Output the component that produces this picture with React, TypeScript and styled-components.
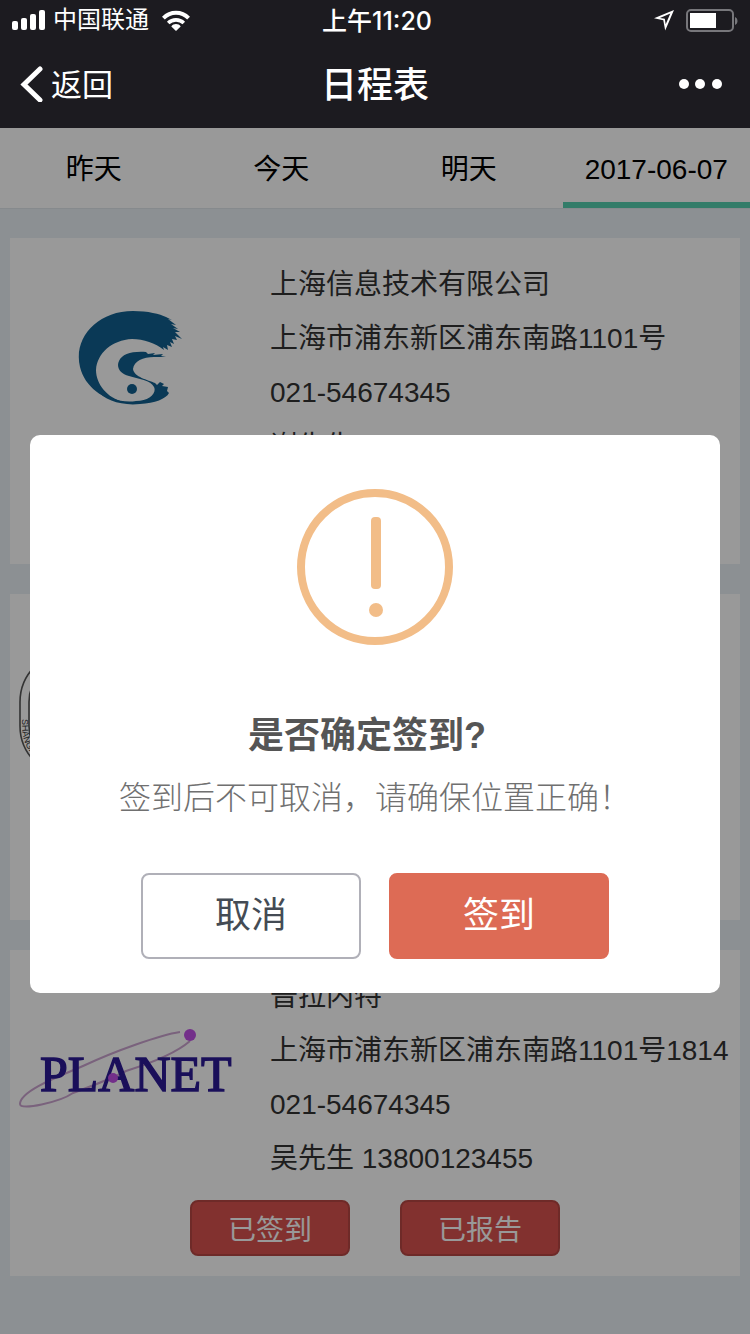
import React from 'react';
import styled, { createGlobalStyle, css } from 'styled-components';

const sans = '"Liberation Sans", "Noto Sans CJK SC", sans-serif';

const GlobalStyle = createGlobalStyle`
  *, *::before, *::after { box-sizing: border-box; }
  body { margin: 0; font-family: ${sans}; background: #e9f0f5; }
  button { font-family: inherit; cursor: pointer; }
  h1, h2, p { margin: 0; }
`;

const Screen = styled.div`
  min-height: 100vh;
  display: flex;
  flex-direction: column;
`;

const Header = styled.header`
  background: #1c1b20;
  color: #fff;
`;

const ThreeColumns = css`
  display: grid;
  grid-template-columns: 1fr auto 1fr;
  align-items: center;
`;

const StatusBar = styled.div`
  ${ThreeColumns}
  height: 40px;
  padding: 0 12px;
  font-size: 24px;
  line-height: 40px;
`;

const StatusSide = styled.div<{ $end?: boolean }>`
  display: flex;
  align-items: center;
  justify-content: ${(p) => (p.$end ? 'flex-end' : 'flex-start')};
  gap: ${(p) => (p.$end ? '12px' : '7px')};
`;

const Carrier = styled.span`
  margin-right: 6px;
`;

const Clock = styled.time`
  padding: 2px 0 0 4px;
  font-family: Inter, "Noto Sans CJK SC", sans-serif;
  font-size: 25px;
  line-height: 38px;
  font-weight: 500;
`;

const NavBar = styled.div`
  ${ThreeColumns}
  height: 88px;
  padding: 0 20px;
`;

const BackButton = styled.button`
  display: flex;
  align-items: center;
  gap: 8px;
  justify-self: start;
  padding: 0;
  border: 0;
  background: none;
  color: #fff;
  font-size: 31px;
  line-height: 44px;
`;

const BackLabel = styled.span`
  padding-top: 4px;
`;

const Title = styled.h1`
  padding-top: 4px;
  font-size: 36px;
  line-height: 44px;
  font-weight: 500;
`;

const MoreButton = styled.button`
  display: flex;
  justify-self: end;
  margin-right: 8px;
  padding: 0;
  border: 0;
  background: none;
`;

const Stage = styled.main`
  position: relative;
  flex: 1;
  padding-bottom: 58px;
  background: #e9f0f5;
`;

const Tabs = styled.nav`
  display: grid;
  grid-template-columns: repeat(4, 1fr);
  height: 81px;
  background: #fff;
  border-bottom: 1px solid #dfe6ec;
`;

const Tab = styled.button<{ $active?: boolean }>`
  padding: 10px 0 0;
  border: 0;
  border-bottom: 6px solid ${(p) => (p.$active ? '#55cfb0' : 'transparent')};
  background: none;
  color: #000;
  font-size: 28px;
  line-height: 54px;
  white-space: nowrap;
`;

const CardList = styled.div`
  display: flex;
  flex-direction: column;
  gap: 30px;
  padding: 29px 10px 0;
`;

const Card = styled.article`
  padding: 20px 0;
  background: #fff;
`;

const CardBody = styled.div`
  display: grid;
  grid-template-columns: 240px 1fr;
  column-gap: 20px;
  min-height: 216px;
`;

const LogoCell = styled.div`
  display: flex;
  align-items: center;
  justify-content: center;
  height: 200px;
`;

const Line = styled.p`
  height: 54px;
  color: #333;
  font-size: 28px;
  line-height: 54px;
  white-space: nowrap;
`;

const CardActions = styled.div`
  display: flex;
  justify-content: center;
  gap: 50px;
  margin-top: 14px;
`;

const StateButton = styled.button`
  width: 160px;
  height: 56px;
  padding: 0;
  border: 2px solid #b84744;
  border-radius: 8px;
  background: #d9534f;
  color: #fff;
  font-size: 28px;
`;

const Overlay = styled.div`
  position: absolute;
  inset: 0;
  display: flex;
  align-items: center;
  justify-content: center;
  padding: 0 30px 34px;
  background: rgba(0, 0, 0, 0.4);
`;

const Dialog = styled.section`
  display: flex;
  flex-direction: column;
  align-items: center;
  width: 100%;
  padding: 54px 20px 34px;
  border-radius: 10px;
  background: #fff;
`;

const DialogTitle = styled.h2`
  margin-top: 65px;
  padding-right: 16px;
  color: #555;
  font-size: 36px;
  line-height: 52px;
  font-weight: 700;
`;

const DialogText = styled.p`
  margin-top: 12px;
  color: #707070;
  font-size: 32px;
  line-height: 48px;
  font-weight: 300;
`;

const DialogActions = styled.div`
  display: flex;
  gap: 28px;
  margin-top: 51px;
`;

const DialogButton = styled.button<{ $primary?: boolean }>`
  width: 220px;
  height: 86px;
  padding: 0 0 8px;
  border: 2px solid ${(p) => (p.$primary ? '#dd6b55' : '#b0b0b8')};
  border-radius: 8px;
  background: ${(p) => (p.$primary ? '#dd6b55' : '#fff')};
  color: ${(p) => (p.$primary ? '#fff' : '#444b54')};
  font-size: 36px;
`;

const SignalIcon = () => (
  <svg width="34" height="22" viewBox="0 0 34 22" fill="#fff" aria-hidden="true">
    <rect x="0" y="12" width="6" height="9" rx="2" />
    <rect x="9" y="9" width="6" height="12" rx="2" />
    <rect x="18" y="5" width="6" height="16" rx="2" />
    <rect x="27" y="1" width="6" height="20" rx="2" />
  </svg>
);

const WifiIcon = () => (
  <svg width="28" height="21" viewBox="0 0 28 21" fill="none" stroke="#fff" strokeWidth="4" aria-hidden="true">
    <path d="M1.4 8.2C8.5 1 19.5 1 26.6 8.2" />
    <path d="M6.2 13C10.5 8.8 17.5 8.8 21.8 13" strokeWidth="3.6" />
    <path d="M9.3 16.4C11.5 13.3 16.5 13.3 18.7 16.4L14 21Z" fill="#fff" stroke="none" />
  </svg>
);

const LocationIcon = () => (
  <svg width="20" height="22" viewBox="0 0 20 22" aria-hidden="true">
    <path
      fill="#fff"
      fillRule="evenodd"
      d="M20 1 0 9.3 9.3 11.2 11.2 21.5ZM16.3 4.6 11.7 15.2 10.8 9.7 5.9 8.9Z"
    />
  </svg>
);

const BatteryIcon = () => (
  <svg width="52" height="24" viewBox="0 0 52 24" aria-hidden="true">
    <rect x="1" y="2" width="46" height="21" rx="4" fill="none" stroke="#77777b" strokeWidth="2" />
    <rect x="4" y="5" width="26" height="15" fill="#fff" />
    <path d="M49 9C52.3 10.3 52.3 15.7 49 17Z" fill="#77777b" />
  </svg>
);

const BackIcon = () => (
  <svg width="23" height="36" viewBox="0 0 23 36" fill="none" stroke="#fff" strokeWidth="5" aria-hidden="true">
    <path d="M20 3 4 18.5 20 34" strokeLinecap="round" />
  </svg>
);

const MoreIcon = () => (
  <svg width="44" height="12" viewBox="0 0 44 12" fill="#fff" aria-hidden="true">
    <circle cx="6" cy="6" r="5" />
    <circle cx="22" cy="6" r="5" />
    <circle cx="39" cy="6" r="5" />
  </svg>
);

const WaveLogo = () => (
  <svg width="104" height="94" viewBox="0 0 104 94" fill="#12608f" role="img" aria-label="上海信息技术有限公司">
    <path d="M55 0C70 0 82 3 88 6L94 9 90 8 98 14 93 13 100 18 95 17 102 21 97 21 104 28 97 25 99 29 94 28 96 33 92 31 94 36 89 34 90 39 85 36 86 39C77 32 66 28 54 28C34 29 19 42 18 59C18 73 29 87 46 91C25 89 7 76 2 56C-5 27 19 0 55 0Z" />
    <path d="M68 41 70 43 77 42 75 44 85 43 83 45 88 46 76 46C65 46 56 50 55 58C56 66 70 69 77 72L79 74 82 71 86 73 84 75 90 76 89 80 91 82C88 88 77 92 62 93C43 95 27 89 18 79C30 88 45 92 58 90C71 90 79 82 76 76C73 69 60 68 51 65C42 63 38 56 41 50C44 43 54 40 68 41Z" />
    <circle cx="54" cy="78" r="5" />
  </svg>
);

const SealLogo = () => (
  <svg width="222" height="126" viewBox="0 0 222 126" fill="none" stroke="#555" role="img" aria-label="SHANGHAI">
    <rect x="1" y="1" width="220" height="124" rx="50" strokeWidth="1.6" />
    <rect x="10" y="10" width="202" height="106" rx="41" strokeWidth="1.6" />
    <path id="seal-rim" d="M3 68V75A47 47 0 0 0 50 122" stroke="none" />
    <text fill="#333" stroke="none" fontSize="9" fontFamily="Liberation Sans, sans-serif">
      <textPath href="#seal-rim">SHANGHAI</textPath>
    </text>
  </svg>
);

const PlanetLogo = () => (
  <svg width="230" height="90" viewBox="0 0 230 90" role="img" aria-label="PLANET">
    <path
      d="M165 7C145 10 100 26 68 41C50 49 5 65 5 79C5 86 45 77 58 68C85 58 100 52 111 46C130 40 160 29 175 16"
      fill="none"
      stroke="#cba4d0"
      strokeWidth="2"
    />
    <text
      x="25"
      y="66"
      fill="#2c1a96"
      stroke="#2c1a96"
      strokeWidth="1.4"
      fontSize="50"
      fontFamily="Liberation Serif, serif"
    >
      PLANET
    </text>
    <circle cx="175" cy="10" r="6" fill="#c04fe6" />
    <circle cx="98" cy="53" r="5" fill="#c04fe6" />
  </svg>
);

const WarningIcon = () => (
  <svg width="156" height="156" viewBox="0 0 156 156" aria-hidden="true">
    <circle cx="78" cy="78" r="74" fill="none" stroke="#f2bd88" strokeWidth="8" />
    <rect x="74" y="28" width="10" height="72" rx="4" fill="#f2bd88" />
    <circle cx="79" cy="121" r="7" fill="#f2bd88" />
  </svg>
);

const tabs = ['昨天', '今天', '明天', '2017-06-07'];

const visits = [
  {
    id: 1,
    logo: <WaveLogo />,
    lines: ['上海信息技术有限公司', '上海市浦东新区浦东南路1101号', '021-54674345', '谢先生'],
    actions: ['已签到', '已报告'],
  },
  {
    id: 2,
    logo: <SealLogo />,
    lines: [],
    actions: ['签到'],
  },
  {
    id: 3,
    logo: <PlanetLogo />,
    lines: ['普拉内特', '上海市浦东新区浦东南路1101号1814', '021-54674345', '吴先生 13800123455'],
    actions: ['已签到', '已报告'],
  },
];

export default function App() {
  return (
    <Screen>
      <GlobalStyle />
      <Header>
        <StatusBar>
          <StatusSide>
            <SignalIcon />
            <Carrier>中国联通</Carrier>
            <WifiIcon />
          </StatusSide>
          <Clock>上午11:20</Clock>
          <StatusSide $end>
            <LocationIcon />
            <BatteryIcon />
          </StatusSide>
        </StatusBar>
        <NavBar>
          <BackButton type="button">
            <BackIcon />
            <BackLabel>返回</BackLabel>
          </BackButton>
          <Title>日程表</Title>
          <MoreButton type="button" aria-label="更多">
            <MoreIcon />
          </MoreButton>
        </NavBar>
      </Header>
      <Stage>
        <Tabs>
          {tabs.map((name, i) => (
            <Tab key={name} type="button" $active={i === tabs.length - 1}>
              {name}
            </Tab>
          ))}
        </Tabs>
        <CardList>
          {visits.map((visit) => (
            <Card key={visit.id}>
              <CardBody>
                <LogoCell>{visit.logo}</LogoCell>
                <div>
                  {visit.lines.map((line) => (
                    <Line key={line}>{line}</Line>
                  ))}
                </div>
              </CardBody>
              <CardActions>
                {visit.actions.map((action) => (
                  <StateButton key={action} type="button">
                    {action}
                  </StateButton>
                ))}
              </CardActions>
            </Card>
          ))}
        </CardList>
        <Overlay>
          <Dialog role="dialog" aria-modal="true" aria-labelledby="confirm-title">
            <WarningIcon />
            <DialogTitle id="confirm-title">是否确定签到?</DialogTitle>
            <DialogText>签到后不可取消，请确保位置正确！</DialogText>
            <DialogActions>
              <DialogButton type="button">取消</DialogButton>
              <DialogButton type="button" $primary>
                签到
              </DialogButton>
            </DialogActions>
          </Dialog>
        </Overlay>
      </Stage>
    </Screen>
  );
}
